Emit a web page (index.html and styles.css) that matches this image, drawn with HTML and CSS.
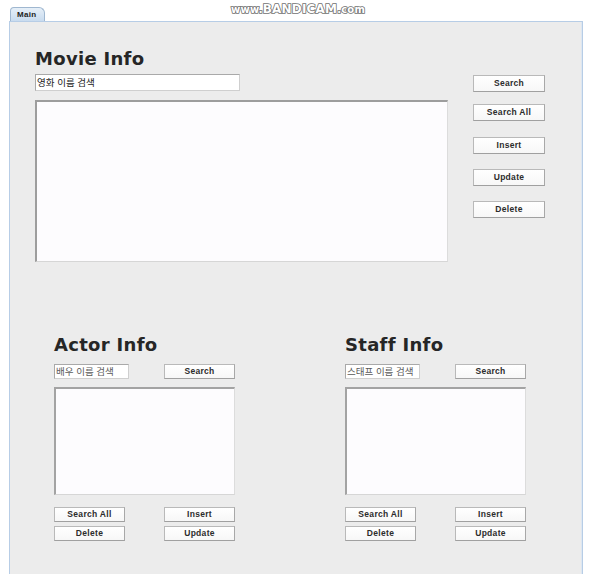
FILE: index.html
```html
<!DOCTYPE html>
<html lang="ko">
<head>
<meta charset="utf-8">
<title>Movie Info</title>
<link rel="stylesheet" href="styles.css">
</head>
<body>
<div class="watermark"><span class="wm-small">www.</span>BANDICAM<span class="wm-small">.com</span></div>
<div class="tab">Main</div>
<div class="panel">
  <div class="top">
    <div class="left">
      <h1 class="title">Movie Info</h1>
      <div class="field field-movie"><span class="ph dark">영화 이름 검색</span></div>
      <div class="area area-movie"></div>
    </div>
    <div class="right">
      <button class="btn">Search</button>
      <button class="btn b-searchall">Search All</button>
      <button class="btn b-insert">Insert</button>
      <button class="btn b-update">Update</button>
      <button class="btn b-delete">Delete</button>
    </div>
  </div>
  <div class="bottom">
    <div class="col">
      <h2 class="title">Actor Info</h2>
      <div class="row">
        <div class="field field-small"><span class="ph">배우 이름 검색</span></div>
        <button class="btn btn-small">Search</button>
      </div>
      <div class="area area-small"></div>
      <div class="btns">
        <button class="btn btn-small">Search All</button>
        <button class="btn btn-small">Insert</button>
        <button class="btn btn-small">Delete</button>
        <button class="btn btn-small">Update</button>
      </div>
    </div>
    <div class="col">
      <h2 class="title">Staff Info</h2>
      <div class="row">
        <div class="field field-small"><span class="ph">스태프 이름 검색</span></div>
        <button class="btn btn-small">Search</button>
      </div>
      <div class="area area-small"></div>
      <div class="btns">
        <button class="btn btn-small">Search All</button>
        <button class="btn btn-small">Insert</button>
        <button class="btn btn-small">Delete</button>
        <button class="btn btn-small">Update</button>
      </div>
    </div>
  </div>
</div>
</body>
</html>
```
FILE: styles.css
```css
* { box-sizing: border-box; }
html, body { margin: 0; padding: 0; background: #ffffff; }
body {
  position: relative;
  width: 600px;
  height: 574px;
  overflow: hidden;
  font-family: "Liberation Sans", Arial, sans-serif;
}
.watermark {
  position: absolute;
  left: 231px;
  top: 2px;
  font-family: "DejaVu Sans", "Liberation Sans", sans-serif;
  font-weight: bold;
  font-size: 12px;
  line-height: 14px;
  color: #ffffff;
  letter-spacing: 0.2px;
  -webkit-text-stroke: 1.6px #6f6f6f;
  paint-order: stroke fill;
}
.wm-small { font-size: 10px; }
.tab {
  margin: 7px 0 0 10px;
  width: 35px;
  height: 14px;
  border: 1px solid #9fb7d0;
  border-bottom: none;
  border-radius: 4px 6px 0 0;
  background: linear-gradient(#e6eff8, #c9dcef);
  font-size: 8px;
  font-weight: bold;
  color: #222;
  line-height: 13px;
  padding-left: 6px;
  letter-spacing: 0.3px;
}
.panel {
  margin-left: 9px;
  width: 574px;
  height: 553px;
  border: 1px solid #b7cde6;
  border-bottom: none;
  background: #ececec;
  padding: 25px 0 0 25px;
  box-shadow: inset -1px 0 0 #dde7f2;
}
.top { display: flex; }
.left { width: 413px; }
.title {
  margin: 0;
  font-family: "DejaVu Sans", "Liberation Sans", sans-serif;
  font-size: 18px;
  line-height: 24px;
  font-weight: bold;
  letter-spacing: 0.3px;
  color: #262626;
}
.field {
  background: #ffffff;
  border: 1px solid #a9a9a9;
  border-right-color: #cfcfcf;
  border-bottom-color: #cfcfcf;
  font-family: "Noto Sans CJK KR", "Noto Sans", sans-serif;
  font-size: 9.5px;
  display: flex;
  align-items: center;
  padding-left: 1px;
  overflow: hidden;
  white-space: nowrap;
}
.ph { color: #5a5a5a; line-height: 1; }
.ph.dark { color: #222222; }
.field-movie { margin-top: 3px; width: 205px; height: 17px; }
.area {
  background: #fdfcfe;
  border-top: 2px solid #9d9d9d;
  border-left: 2px solid #9d9d9d;
  border-right: 1px solid #dcdcdc;
  border-bottom: 1px solid #d6d6d6;
}
.area-movie { margin-top: 9px; height: 162px; }
.right {
  margin-left: 25px;
  padding-top: 28px;
  display: flex;
  flex-direction: column;
  align-items: flex-start;
}
.btn {
  width: 72px;
  height: 17px;
  margin: 0;
  padding: 0;
  border: 1px solid #b9b9b9;
  border-right-color: #a8a8a8;
  border-bottom-color: #a0a0a0;
  background: linear-gradient(#ffffff, #f7f7f7);
  font-family: "Liberation Sans", Arial, sans-serif;
  font-size: 8.5px;
  font-weight: bold;
  letter-spacing: 0.3px;
  color: #2c2c2c;
  line-height: 15px;
  text-align: center;
}
.b-searchall { margin-top: 12px; }
.b-insert { margin-top: 16px; }
.b-update { margin-top: 15px; }
.b-delete { margin-top: 15px; }
.bottom {
  margin-top: 71px;
  padding-left: 19px;
  display: flex;
  gap: 110px;
}
.col { width: 181px; }
.row {
  margin-top: 7px;
  display: flex;
  justify-content: space-between;
}
.field-small { width: 75px; height: 15px; }
.btn-small { width: 71px; height: 15px; line-height: 13px; }
.area-small {
  margin-top: 8px;
  height: 108px;
  border-top: 2px solid #a3a3a3;
  border-left: 2px solid #a3a3a3;
}
.btns {
  margin-top: 12px;
  display: grid;
  grid-template-columns: 71px 71px;
  justify-content: space-between;
  row-gap: 4px;
}
```
